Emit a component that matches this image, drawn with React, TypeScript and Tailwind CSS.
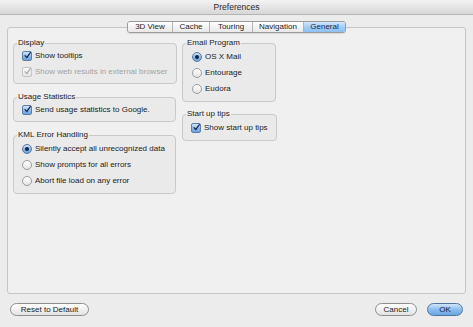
import React from 'react';

const FONT = { fontFamily: '"Liberation Sans", Arial, sans-serif' };

function Checkbox({ checked, disabled }: { checked: boolean; disabled?: boolean }) {
  return (
    <span
      className={`flex items-center justify-center w-[10px] h-[10px] rounded-[2px] border shrink-0 ${
        disabled
          ? 'border-[#c4c4c4] bg-gradient-to-b from-[#fbfbfb] to-[#e6e6e6]'
          : 'border-[#5b7ea8] bg-gradient-to-b from-[#d4e7fa] via-[#8fbbe8] to-[#6aa3de]'
      }`}
    >
      {checked && (
        <svg width="9" height="9" viewBox="0 0 10 10" className="-mt-[2px] ml-[1px]">
          <path
            d="M1.5 5.2 L4 8 L9 0.8"
            fill="none"
            stroke={disabled ? '#a8a8a8' : '#15254a'}
            strokeWidth="1.7"
            strokeLinecap="round"
            strokeLinejoin="round"
          />
        </svg>
      )}
    </span>
  );
}

function Radio({ checked }: { checked: boolean }) {
  return (
    <span
      className={`flex items-center justify-center w-[10px] h-[10px] rounded-full border shrink-0 ${
        checked
          ? 'border-[#52779f] bg-gradient-to-b from-[#d4e7fa] via-[#8fbbe8] to-[#6aa3de]'
          : 'border-[#9c9c9c] bg-gradient-to-b from-[#ffffff] to-[#e4e4e4]'
      }`}
    >
      {checked && <span className="w-[4px] h-[4px] rounded-full bg-[#142244]" />}
    </span>
  );
}

function Row({ children, label, disabled }: { children: React.ReactNode; label: string; disabled?: boolean }) {
  return (
    <div className="flex items-center h-[16px] gap-[3px]">
      {children}
      <span className={`text-[8px] leading-none whitespace-nowrap ${disabled ? 'text-[#a3a3a3]' : 'text-[#1b1b1b]'}`}>
        {label}
      </span>
    </div>
  );
}

function Group({ title, children, className = '' }: { title: string; children: React.ReactNode; className?: string }) {
  return (
    <fieldset className={`border border-[#c9c9c9] rounded-[4px] bg-[#eaeaea] ${className}`}>
      <legend className="ml-[3px] px-[1px] text-[8px] leading-[10px] text-[#1b1b1b]">{title}</legend>
      <div className="px-[8px]">{children}</div>
    </fieldset>
  );
}

const TABS = ['3D View', 'Cache', 'Touring', 'Navigation', 'General'];
const TAB_W = ['w-[44px]', 'w-[37px]', 'w-[43px]', 'w-[51px]', 'w-[42px]'];

export default function App() {
  return (
    <div style={FONT} className="w-[473px] h-[327px] bg-[#ececec] flex flex-col overflow-hidden">
      <div className="h-[15px] shrink-0 bg-gradient-to-b from-[#f3f3f3] to-[#d7d7d7] border-b border-[#b5b5b5] flex items-center justify-center">
        <span className="text-[8.5px] leading-none text-[#2a2a2a]">Preferences</span>
      </div>

      <div className="flex justify-center mt-[6px] relative z-10">
        <div className="flex h-[12px] rounded-[3px] border border-[#9b9b9b] overflow-hidden shadow-[0_1px_1px_rgba(0,0,0,0.1)]">
          {TABS.map((t, i) => (
            <div
              key={t}
              className={`${TAB_W[i]} flex items-center justify-center text-[8px] leading-none ${
                i > 0 ? 'border-l border-[#b3b3b3]' : ''
              } ${
                t === 'General'
                  ? 'bg-gradient-to-b from-[#d3e8fc] via-[#a4cdf4] to-[#8cc0f0] text-[#17294f]'
                  : 'bg-gradient-to-b from-[#ffffff] to-[#e8e8e8] text-[#1e1e1e]'
              }`}
            >
              {t}
            </div>
          ))}
        </div>
      </div>

      <div className="mx-[7px] -mt-[6px] h-[267px] shrink-0 border border-[#c6c6c6] rounded-[3px] bg-[#f0f0f0] pt-[10px] pl-[5px] flex gap-[6px] items-start">
        <div className="w-[163px] flex flex-col gap-[8px]">
          <Group title="Display" className="pb-[3px]">
            <Row label="Show tooltips">
              <Checkbox checked />
            </Row>
            <Row label="Show web results in external browser" disabled>
              <Checkbox checked disabled />
            </Row>
          </Group>
          <Group title="Usage Statistics" className="pb-[3px]">
            <Row label="Send usage statistics to Google.">
              <Checkbox checked />
            </Row>
          </Group>
          <Group title="KML Error Handling" className="pb-[4px]">
            <div className="pt-[1px]">
              <Row label="Silently accept all unrecognized data">
                <Radio checked />
              </Row>
              <Row label="Show prompts for all errors">
                <Radio checked={false} />
              </Row>
              <Row label="Abort file load on any error">
                <Radio checked={false} />
              </Row>
            </div>
          </Group>
        </div>

        <div className="w-[94px] flex flex-col gap-[7px]">
          <Group title="Email Program" className="pb-[4px]">
            <div className="pt-[1px] pl-[1px]">
              <Row label="OS X Mail">
                <Radio checked />
              </Row>
              <Row label="Entourage">
                <Radio checked={false} />
              </Row>
              <Row label="Eudora">
                <Radio checked={false} />
              </Row>
            </div>
          </Group>
          <Group title="Start up tips" className="pb-[4px]">
            <div className="pt-[1px]">
              <Row label="Show start up tips">
                <Checkbox checked />
              </Row>
            </div>
          </Group>
        </div>
      </div>

      <div className="flex items-start pt-[9px] pl-[10px] pr-[10px]">
        <button className="w-[79px] h-[13px] rounded-full border border-[#8e8e8e] bg-gradient-to-b from-[#ffffff] to-[#e3e3e3] text-[8px] leading-none text-[#1b1b1b]">
          Reset to Default
        </button>
        <div className="flex-1" />
        <button className="w-[42px] h-[13px] rounded-full border border-[#8e8e8e] bg-gradient-to-b from-[#ffffff] to-[#e3e3e3] text-[8px] leading-none text-[#1b1b1b]">
          Cancel
        </button>
        <button className="ml-[10px] w-[36px] h-[13px] rounded-full border border-[#4f76a3] bg-gradient-to-b from-[#cfe5fb] via-[#8dbdee] to-[#6ba6e2] text-[8px] leading-none text-[#10203f]">
          OK
        </button>
      </div>
    </div>
  );
}
